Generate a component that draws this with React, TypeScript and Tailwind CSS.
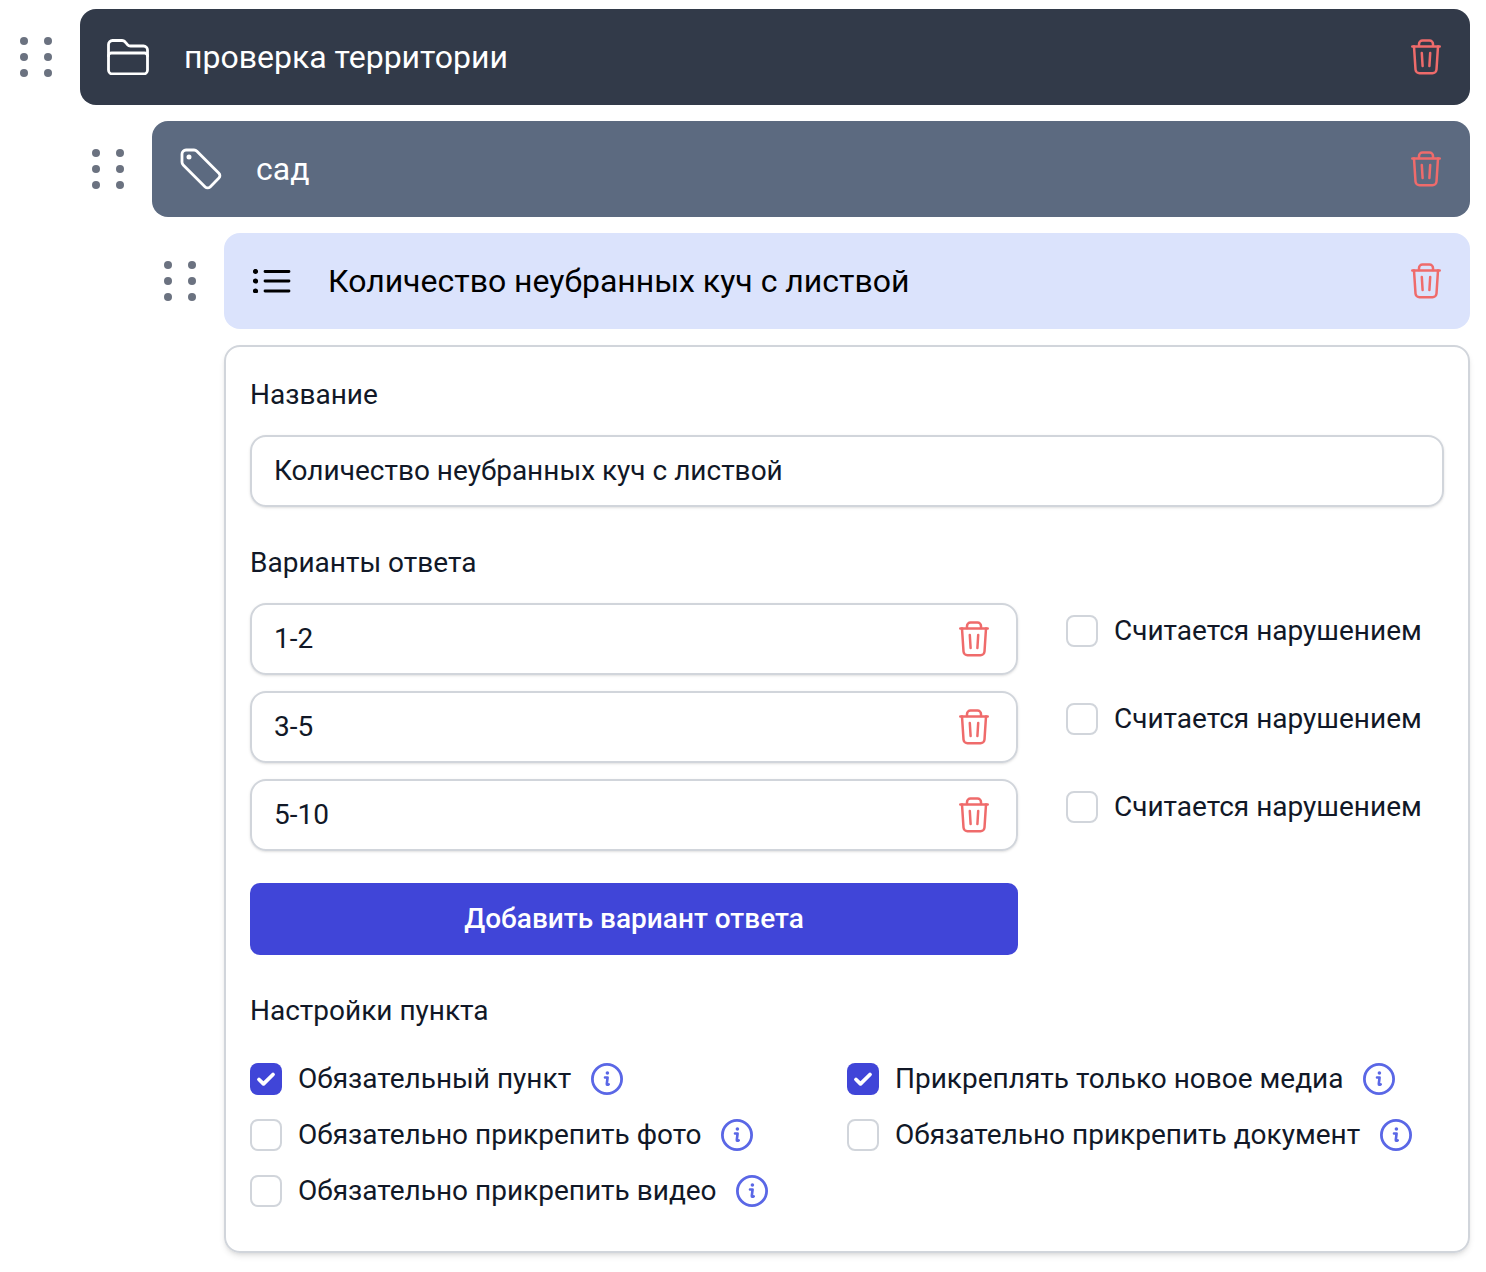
const font = { fontFamily: "Roboto, Inter, sans-serif" };

function Dots() {
  return (
    <div className="grid w-[32px] shrink-0 grid-cols-2 gap-x-[16px] gap-y-[8px]">
      {[0, 1, 2, 3, 4, 5].map((i) => (
        <span key={i} className="h-[8px] w-[8px] rounded-full bg-[#6b7280]" />
      ))}
    </div>
  );
}

function Trash() {
  return (
    <svg viewBox="0 0 32 36" width="32" height="36" fill="none" stroke="#ef6b6b" strokeWidth="2.5" strokeLinecap="round" strokeLinejoin="round">
      <path d="M2.300 7.500h27.400" />
      <path d="M9 7V5a3.500 3.500 0 0 1 3.500-3.500h7A3.500 3.500 0 0 1 23 5v2" />
      <path d="M4 7.500l1.500 23a4 4 0 0 0 4 3.700h13a4 4 0 0 0 4-3.700l1.500-23" />
      <path d="M11.800 14l.8 13M20.200 14l-.8 13" />
    </svg>
  );
}

function Folder() {
  return (
    <svg viewBox="0 0 42 36" width="42" height="36" fill="none" stroke="white" strokeWidth="2.8" strokeLinecap="round" strokeLinejoin="round">
      <path d="M1.500 5.500a4 4 0 0 1 4-4h9.500a4 4 0 0 1 3 1.300l2.500 2.900a4 4 0 0 0 3 1.300h13a4 4 0 0 1 4 4v20a4 4 0 0 1-4 4h-31a4 4 0 0 1-4-4Z" />
      <path d="M1.500 17a3 3 0 0 1 3-3h33a3 3 0 0 1 3 3" />
    </svg>
  );
}

function Tag() {
  return (
    <svg viewBox="0 0 42 42" width="42" height="42" fill="none" stroke="white" strokeWidth="2.8" strokeLinecap="round" strokeLinejoin="round" className="ml-[1px]">
      <path d="M6 2h8a4 4 0 0 1 2.900 1.200l22 22a3.500 3.500 0 0 1 0 4.900l-8.800 8.800a3.500 3.500 0 0 1-4.900 0l-22-22A4 4 0 0 1 2 14V6a4 4 0 0 1 4-4Z" />
      <circle cx="9" cy="9" r="1.100" fill="white" />
    </svg>
  );
}

function ListIcon() {
  return (
    <svg viewBox="0 0 38 24" width="38" height="24" fill="none" stroke="black" strokeWidth="2.800" strokeLinecap="round" className="ml-[2px]">
      <path d="M12 2.500h24M12 12h24M12 22h24" />
      <circle cx="2.500" cy="2.500" r="1.200" fill="black" />
      <circle cx="2.500" cy="12" r="1.200" fill="black" />
      <circle cx="2.500" cy="22" r="1.200" fill="black" />
    </svg>
  );
}

function Info() {
  return (
    <svg viewBox="0 0 32 32" width="32" height="32" fill="none" className="shrink-0">
      <circle cx="16" cy="16" r="14.600" stroke="#5a67e6" strokeWidth="2.800" />
      <circle cx="16.400" cy="10" r="1.800" fill="#5a67e6" />
      <path d="M14 14.500h2.600l-.8 6.300c-.1.900.6 1.300 1.900.6" stroke="#5a67e6" strokeWidth="2.600" strokeLinecap="round" strokeLinejoin="round" />
    </svg>
  );
}

function Check({ on = false }: { on?: boolean }) {
  if (on) {
    return (
      <span className="flex h-[32px] w-[32px] shrink-0 items-center justify-center rounded-[8px] bg-[#4045d8]">
        <svg viewBox="0 0 20 20" width="20" height="20" fill="none" stroke="white" strokeWidth="3.800" strokeLinecap="round" strokeLinejoin="round">
          <path d="M3 10.500l4.500 4.300 9.500-9.300" />
        </svg>
      </span>
    );
  }
  return <span className="h-[32px] w-[32px] shrink-0 rounded-[8px] border-2 border-[#d1d5db] bg-white" />;
}

function Row({ dark, indent, icon, title, color }: { dark: string; indent: string; icon: React.ReactNode; title: string; color: string }) {
  return (
    <div className={`flex items-center ${indent}`}>
      <div className="flex w-[60px] shrink-0 justify-start">
        <Dots />
      </div>
      <div className={`flex h-[96px] flex-1 items-center rounded-[16px] pl-[27px] pr-[28px] ${dark}`}>
        <div className="flex w-[77px] shrink-0 items-center">{icon}</div>
        <span className={`flex-1 text-[32px] leading-none ${color}`}>{title}</span>
        <Trash />
      </div>
    </div>
  );
}

function Setting({ label, on }: { label: string; on?: boolean }) {
  return (
    <div className="flex h-[56px] items-center">
      <Check on={on} />
      <span className="ml-[16px] mr-[19.500px] text-[28px] leading-none text-[#111827]">{label}</span>
      <Info />
    </div>
  );
}

function AnswerRow({ value }: { value: string }) {
  return (
    <div className="flex h-[72px] items-center justify-between rounded-[16px] border-2 border-[#d1d5db] pl-[22px] pr-[26px] shadow-sm">
      <span className="text-[28px] leading-none text-[#111827]">{value}</span>
      <Trash />
    </div>
  );
}

function ViolationCheck() {
  return (
    <div className="flex h-[72px] items-start pt-[12px]">
      <Check />
      <span className="ml-[16px] text-[28px] leading-[32px] text-[#111827]">Считается нарушением</span>
    </div>
  );
}

export default function App() {
  const answers = ["1-2", "3-5", "5-10"];
  return (
    <div className="flex w-[1486px] flex-col gap-[16px] bg-white pb-[19px] pl-[20px] pr-[16px] pt-[9px]" style={font}>
      <Row indent="" dark="bg-[#323a49]" color="text-white" icon={<Folder />} title="проверка территории" />
      <Row indent="pl-[72px]" dark="bg-[#5c6a80]" color="text-white" icon={<Tag />} title="сад" />
      <Row indent="pl-[144px]" dark="bg-[#dbe3fc]" color="text-black" icon={<ListIcon />} title="Количество неубранных куч с листвой" />

      <div className="ml-[204px] rounded-[16px] border-2 border-[#d1d5db] px-[24px] pb-[32px] pt-[32px] shadow-md">
        <div className="text-[28px] leading-[32px] text-[#111827]">Название</div>
        <div className="mt-[24px] flex h-[72px] items-center rounded-[16px] border-2 border-[#d1d5db] px-[22px] text-[28px] text-[#111827] shadow-sm">
          Количество неубранных куч с листвой
        </div>

        <div className="mt-[40px] text-[28px] leading-[32px] text-[#111827]">Варианты ответа</div>
        <div className="mt-[24px] flex">
          <div className="flex w-[768px] flex-col gap-[16px]">
            {answers.map((a) => (
              <AnswerRow key={a} value={a} />
            ))}
            <button className="mt-[16px] h-[72px] rounded-[10px] bg-[#4045d8] text-[28px] font-medium text-white">
              Добавить вариант ответа
            </button>
          </div>
          <div className="ml-[48px] flex flex-col gap-[16px]">
            {answers.map((a) => (
              <ViolationCheck key={a} />
            ))}
          </div>
        </div>

        <div className="mt-[40px] text-[28px] leading-[32px] text-[#111827]">Настройки пункта</div>
        <div className="mt-[24px] grid grid-cols-2">
          <Setting label="Обязательный пункт" on />
          <Setting label="Прикреплять только новое медиа" on />
          <Setting label="Обязательно прикрепить фото" />
          <Setting label="Обязательно прикрепить документ" />
          <Setting label="Обязательно прикрепить видео" />
        </div>
      </div>
    </div>
  );
}
